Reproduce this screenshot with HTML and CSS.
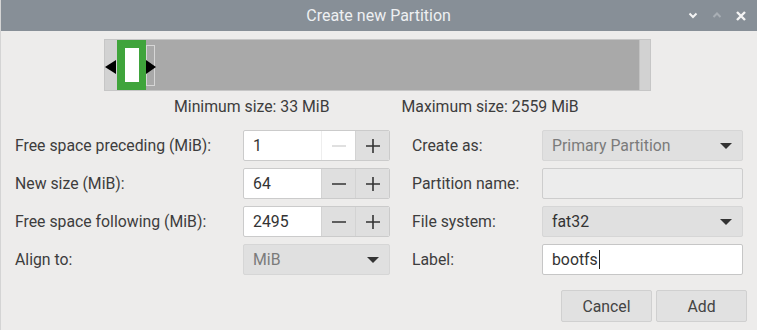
FILE: index.html
```html
<!DOCTYPE html>
<html lang="en">
<head>
    <meta charset="UTF-8">
    <title>Create new Partition</title>
    <link rel="stylesheet" href="styles.css">
</head>
<body>
    <div class="window">
        <div class="titlebar">
            <span></span>
            <span class="title">Create new Partition</span>
            <div class="win-btns">
                <svg class="win-btn" width="10" height="7" viewBox="0 0 10 7"><path d="M1.5 1.5 L5 5 L8.5 1.5" fill="none" stroke="#f4f4f4" stroke-width="2"/></svg>
                <svg class="win-btn" width="10" height="7" viewBox="0 0 10 7"><path d="M1.5 5 L5 1.5 L8.5 5" fill="none" stroke="#a8aeb4" stroke-width="2"/></svg>
                <svg class="win-btn" width="10" height="10" viewBox="0 0 10 10"><path d="M1 1 L9 9 M9 1 L1 9" fill="none" stroke="#f4f4f4" stroke-width="2.4"/></svg>
            </div>
        </div>

        <div class="content">
            <!-- partition graph -->
            <div class="graph">
                <div class="seg-before"></div>
                <div class="seg-part"><div class="part-inner"></div></div>
                <div class="seg-rest"><div class="ghost"></div></div>
                <div class="seg-after"></div>
                <svg class="handle handle-left" width="11" height="14" viewBox="0 0 11 14"><path d="M0 7 L11 0 L11 14 Z" fill="#000"/></svg>
                <svg class="handle handle-right" width="10" height="14" viewBox="0 0 10 14"><path d="M10 7 L0 0 L0 14 Z" fill="#000"/></svg>
            </div>

            <div class="sizes">
                <span>Minimum size: 33 MiB</span>
                <span>Maximum size: 2559 MiB</span>
            </div>

            <div class="form">
                <label>Free space preceding (MiB):</label>
                <div class="spin">
                    <span class="spin-value">1</span>
                    <span class="spin-btn disabled"><svg width="16" height="16" viewBox="0 0 16 16"><path d="M1 8 H15" stroke="#d6d6d6" stroke-width="1.6"/></svg></span>
                    <span class="spin-btn"><svg width="16" height="16" viewBox="0 0 16 16"><path d="M1 8 H15 M8 1 V15" stroke="#333" stroke-width="1.6"/></svg></span>
                </div>
                <label class="col2">Create as:</label>
                <div class="combo disabled">
                    <span>Primary Partition</span>
                    <svg width="12" height="6" viewBox="0 0 12 6"><path d="M0 0 H12 L6 6 Z" fill="#333"/></svg>
                </div>

                <label>New size (MiB):</label>
                <div class="spin">
                    <span class="spin-value">64</span>
                    <span class="spin-btn"><svg width="16" height="16" viewBox="0 0 16 16"><path d="M1 8 H15" stroke="#333" stroke-width="1.6"/></svg></span>
                    <span class="spin-btn"><svg width="16" height="16" viewBox="0 0 16 16"><path d="M1 8 H15 M8 1 V15" stroke="#333" stroke-width="1.6"/></svg></span>
                </div>
                <label class="col2">Partition name:</label>
                <div class="entry disabled"></div>

                <label>Free space following (MiB):</label>
                <div class="spin">
                    <span class="spin-value">2495</span>
                    <span class="spin-btn"><svg width="16" height="16" viewBox="0 0 16 16"><path d="M1 8 H15" stroke="#333" stroke-width="1.6"/></svg></span>
                    <span class="spin-btn"><svg width="16" height="16" viewBox="0 0 16 16"><path d="M1 8 H15 M8 1 V15" stroke="#333" stroke-width="1.6"/></svg></span>
                </div>
                <label class="col2">File system:</label>
                <div class="combo">
                    <span>fat32</span>
                    <svg width="12" height="6" viewBox="0 0 12 6"><path d="M0 0 H12 L6 6 Z" fill="#333"/></svg>
                </div>

                <label>Align to:</label>
                <div class="combo disabled">
                    <span>MiB</span>
                    <svg width="12" height="6" viewBox="0 0 12 6"><path d="M0 0 H12 L6 6 Z" fill="#333"/></svg>
                </div>
                <label class="col2">Label:</label>
                <div class="entry"><span class="caret">bootfs</span></div>
            </div>

            <div class="actions">
                <button class="btn">Cancel</button>
                <button class="btn">Add</button>
            </div>
        </div>
    </div>
</body>
</html>
```

FILE: styles.css
```css
body {
    margin: 0;
    font-family: Roboto, "Liberation Sans", sans-serif;
    font-size: 15.8px;
    color: #3d3d3d;
    background: #edeceb;
}
.window {
    width: 757px;
    height: 330px;
    background: #edeceb;
    border-left: 1px solid #d4d4d4;
    box-sizing: border-box;
}
.titlebar {
    height: 31px;
    background: #878f97;
    display: grid;
    grid-template-columns: 1fr auto 1fr;
    align-items: center;
}
.title {
    color: #eef0f2;
    font-size: 16.5px;
    transform: scaleX(0.97);
}
.win-btns {
    display: flex;
    justify-content: flex-end;
    align-items: center;
    gap: 14px;
    padding-right: 11px;
}
.win-btn { display: block; }

.content {
    padding-top: 8px;
}
.graph {
    position: relative;
    margin-left: 103px;
    width: 547px;
    height: 52px;
    border: 1px solid #c6c6c6;
    box-sizing: border-box;
    display: flex;
}
.seg-before { width: 12px; background: #d2d2d2; }
.seg-part {
    width: 29px;
    background: #3fa43b;
    display: flex;
    align-items: center;
    justify-content: center;
}
.part-inner {
    width: 14px;
    height: 34px;
    background: #fff;
}
.seg-rest {
    flex: 1;
    background: #a9a9a9;
    display: flex;
    align-items: center;
}
.ghost {
    width: 9px;
    height: 41px;
    border: 1px solid #d6d6d6;
    box-sizing: border-box;
}
.seg-after { width: 10px; background: #d2d2d2; border-left: 1px solid #c2c2c2; }
.handle { position: absolute; top: 20px; }
.handle-left { left: 0; }
.handle-right { left: 41px; }

.sizes {
    height: 39px;
    padding: 0 0 9px 173px;
    box-sizing: border-box;
    display: flex;
    align-items: center;
    gap: 72px;
}

.form {
    display: grid;
    grid-template-columns: 228px 147px 152px 201px;
    grid-auto-rows: 31px;
    row-gap: 7px;
    padding-left: 14px;
    align-items: center;
}
.form > label { white-space: nowrap; }
.form .col2 { padding-left: 22px; }

.spin {
    height: 31px;
    display: flex;
    border: 1px solid #cbcbcb;
    border-radius: 2px;
    box-sizing: border-box;
    background: #fff;
    overflow: hidden;
}
.spin-value {
    flex: 1;
    padding-left: 9px;
    display: flex;
    align-items: center;
    color: #333;
}
.spin-btn {
    width: 33px;
    display: flex;
    align-items: center;
    justify-content: center;
    background: #dfdfdf;
    border-left: 1px solid #d3d3d3;
}
.spin-btn.disabled { background: #fff; border-left: 1px solid #eeeeee; }
.spin-btn svg { display: block; }

.combo {
    height: 31px;
    box-sizing: border-box;
    display: flex;
    align-items: center;
    justify-content: space-between;
    padding: 0 9px;
    background: #e0e0e0;
    border: 1px solid #d6d6d6;
    border-radius: 2px;
    color: #333;
}
.combo.disabled span { color: #7b7b7b; }
.combo svg { display: block; margin-right: 1px; }

.entry {
    height: 31px;
    box-sizing: border-box;
    display: flex;
    align-items: center;
    padding: 0 9px;
    background: #fff;
    border: 1px solid #c6c6c6;
    border-radius: 2px;
    color: #333;
}
.entry.disabled { background: #ececec; border-color: #cdcdcd; }
.caret { border-right: 1px solid #222; padding-right: 1px; line-height: 19px; }

.actions {
    display: flex;
    justify-content: flex-end;
    gap: 4px;
    padding-right: 10px;
    margin-top: 15px;
}
.btn {
    width: 91px;
    height: 32px;
    font-family: Roboto, "Liberation Sans", sans-serif;
    font-size: 15.8px;
    color: #444;
    background: #e1e1e1;
    border: 1px solid #d0d0d0;
    border-radius: 2px;
}
```
